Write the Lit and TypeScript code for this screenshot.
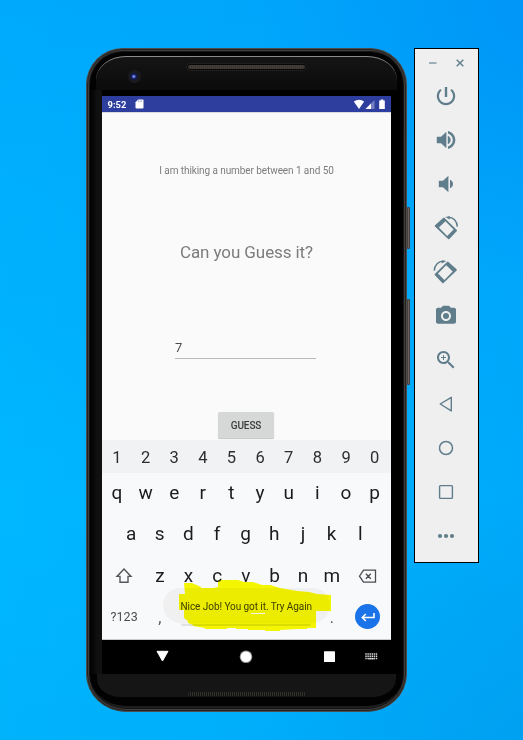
import { LitElement, html, svg, css } from "lit";
import { customElement, property } from "lit/decorators.js";

const rotated = () => svg`<path fill-rule="evenodd" d="M.8 10Q.6 9.6 1 9.2L9.4 1.8Q10 1.4 10.6 1.9L22.8 14Q23.3 14.6 22.9 15.1L15.3 23Q14.7 23.5 14.1 23L1.2 10.7zM4.9 11.6 13.2 19.9 19.6 13.4 11.4 5.2z"/><path d="M11.2 1 15.8 .2V3.4z"/><path d="M14 1.2C19.3 1 23 5 23.3 10.6" fill="none" stroke="#607d8b" stroke-width="1.5"/>`;

const toolIcons = [
  svg`<path d="M13.2 3h-2.4v10h2.4V3zm4.6 2l-1.5 1.5C17.99 7.86 19 9.81 19 12c0 3.87-3.13 7-7 7s-7-3.13-7-7c0-2.19 1.01-4.14 2.7-5.5L6.2 5C4.2 6.7 2.8 9.26 2.8 12c0 5.1 4.13 9.2 9.2 9.2s9.2-4.1 9.2-9.2c0-2.74-1.4-5.3-3.4-7z"/>`,
  svg`<path d="M2.8 8.8v6.4h4.2l5.4 5V3.8L7 8.8zm13.9 3.2c0-1.9-1.02-3.49-2.9-4.33v8.65c1.88-.83 2.9-2.45 2.9-4.32zM14 3v2.5c2.89.86 4.8 3.44 4.8 6.5s-1.91 5.65-4.8 6.5V21c4.11-.91 7.3-4.49 7.3-9s-3.19-8.09-7.3-9z"/>`,
  svg`<path d="M19 12c0-1.87-1.02-3.39-3-4.23v8.45c1.98-.83 3-2.35 3-4.22zM4.8 8.8v6.4H9l5.4 5V3.8L9 8.8H4.8z"/>`,
  rotated(),
  svg`<g transform="matrix(-1 0 0 1 23.6 0)">${rotated()}</g>`,
  svg`<g transform="translate(0 -.3)"><circle cx="12" cy="12.3" r="3"/><path d="M9 2L7.17 4H4c-1.1 0-2 .9-2 2v12c0 1.1.9 2 2 2h16c1.1 0 2-.9 2-2V6c0-1.1-.9-2-2-2h-3.17L15 2H9zm3 15.2c-2.76 0-5-2.24-5-5s2.24-5 5-5 5 2.24 5 5-2.24 5-5 5z"/></g>`,
  svg`<path d="M15.5 14h-.79l-.28-.27C15.41 12.59 16 11.11 16 9.5 16 5.91 13.09 3 9.5 3S3 5.91 3 9.5 5.91 16 9.5 16c1.61 0 3.09-.59 4.23-1.57l.27.28v.79l5 4.99L20.49 19l-4.99-5zm-6 0C7.01 14 5 11.99 5 9.5S7.01 5 9.5 5 14 7.01 14 9.5 11.99 14 9.5 14zM12 10h-2v2H9v-2H7V9h2V7h1v2h2v1z"/>`,
  svg`<path d="M6.2 12 17.3 5.3V18.9z" fill="none" stroke="#607d8b" stroke-width="1.4" stroke-linejoin="round"/>`,
  svg`<circle cx="12" cy="12" r="6.5" fill="none" stroke="#607d8b" stroke-width="1.5"/>`,
  svg`<rect x="5.6" y="5.6" width="12.8" height="12.8" rx=".8" fill="none" stroke="#607d8b" stroke-width="1.4"/>`,
  svg`<circle cx="6" cy="12" r="2.1"/><circle cx="12" cy="12" r="2.1"/><circle cx="18" cy="12" r="2.1"/>`,
];

@customElement("emulator-toolbar")
export class EmulatorToolbar extends LitElement {
  static styles = css`
    :host {
      display: block;
      box-sizing: border-box;
      width: 65px;
      height: 515px;
      border: 1px solid #000;
      background: #efefef;
    }
    .window {
      display: flex;
      justify-content: space-between;
      padding: 8px 12px 0 13px;
      height: 17px;
    }
    .window svg { width: 12px; height: 12px; }
    .tools { display: flex; flex-direction: column; align-items: center; }
    .tool { height: 44px; display: flex; align-items: center; padding-right: 1px; }
    .tool svg { width: 24px; height: 24px; fill: #607d8b; overflow: visible; }
  `;
  render() {
    return html`
      <div class="window">
        <svg viewBox="0 0 12 12"><path d="M1 6h7.5" stroke="#8fa3ad" stroke-width="1.7" /></svg>
        <svg viewBox="0 0 12 12"><path d="M2.7 2.7l6.6 6.6M9.3 2.7l-6.6 6.6" stroke="#607d8b" stroke-width="1.4" /></svg>
      </div>
      <div class="tools">
        ${toolIcons.map((i) => html`<div class="tool"><svg viewBox="0 0 24 24">${i}</svg></div>`)}
      </div>
    `;
  }
}

@customElement("soft-keyboard")
export class SoftKeyboard extends LitElement {
  @property() toast = "";

  static styles = css`
    :host {
      display: block;
      position: relative;
      height: 200px;
      background: #f8f9fb;
      color: #1b1c1e;
      font-family: Roboto, sans-serif;
      box-shadow: inset 0 -1px #c9cbcb;
    }
    .row {
      display: grid;
      grid-auto-flow: column;
      grid-auto-columns: 28.65px;
      height: 41.5px;
      line-height: 41.5px;
      padding-left: 0.6px;
      font-size: 19px;
      text-align: center;
    }
    .digits { height: 33px; line-height: 36px; background: #f1f2f4; font-size: 16.5px; color: #2d2e30; }
    .first { height: 40px; line-height: 39px; }
    .second { padding-left: 14.8px; line-height: 42px; }
    .third { grid-template-columns: 43px repeat(7, 28.65px) 43px; line-height: 42px; }
    .last { grid-template-columns: 43px 28.65px 143.2px 28.65px 43px; height: 43px; line-height: 41px; }
    .icon { display: flex; align-items: center; justify-content: center; }
    .mode { font-size: 12.5px; letter-spacing: 0.1px; color: #4b4d50; }
    .mark { color: #55575a; font-size: 16px; line-height: 44px; }
    .space { height: 26px; margin: 2px 6px 0 7px; background: #f4f4f5; border-radius: 2px; box-shadow: 0 2px #dfe1e2; }
    .enter { width: 25px; height: 25px; border-radius: 50%; background: #1a73e8; display: flex; align-items: center; justify-content: center; margin-bottom: 3px; }
    .toast {
      position: absolute;
      left: 61px;
      top: 148px;
      width: 167px;
      height: 35px;
      box-sizing: border-box;
      border-radius: 18px;
      background: rgba(240, 240, 240, 0.97);
      color: #404040;
      font-size: 10px;
      letter-spacing: -0.06px;
      line-height: 37px;
      padding-left: 17.5px;
      white-space: nowrap;
    }
    .marker { position: absolute; left: 74px; top: 139px; width: 157px; height: 54px; mix-blend-mode: multiply; }
    .fleck { position: absolute; left: 149px; top: 173px; width: 14px; height: 1px; background: #f4f4e4; }
  `;
  private keys(s: string) {
    return [...s].map((c) => html`<span>${c}</span>`);
  }
  render() {
    return html`
      <div class="row digits">${this.keys("1234567890")}</div>
      <div class="row first">${this.keys("qwertyuiop")}</div>
      <div class="row second">${this.keys("asdfghjkl")}</div>
      <div class="row third">
        <span class="icon"><svg width="18" height="18" viewBox="0 0 18 18"><path d="M9 2 2 9.4h3v5.9h8V9.4h3z" fill="none" stroke="#55575a" stroke-width="1.4" /></svg></span>
        ${this.keys("zxcvbnm")}
        <span class="icon"><svg width="20" height="18" viewBox="0 0 20 18"><path d="M5.5 3.2h12v12H5.5L1.5 9.2zM7.8 6.7l5 5M12.8 6.7l-5 5" fill="none" stroke="#4b4d50" stroke-width="1.3" /></svg></span>
      </div>
      <div class="row last">
        <span class="mode">?123</span>
        <span class="mark">,</span>
        <span class="space"></span>
        <span class="mark">.</span>
        <span class="icon"><span class="enter"><svg width="16" height="14" viewBox="0 0 16 14"><path d="M14 3v4.5H2.5M5.8 4 2.3 7.5 5.8 11" fill="none" stroke="#fff" stroke-width="1.6" /></svg></span></span>
      </div>
      <div class="toast">${this.toast}</div>
      <svg class="marker" viewBox="176 579 157 54">
        <path fill="#fbfb00" d="M184 583h8l9 4v1h12l5-1v-7h20l6 2h9l9 3h8l10 3 17 3 12 1 8 2 14 1v16h-15v17h-9v1h-10l-17 1v1h-15v-1h-17v-1h-12v-1h-9v1h-22v-1l-12-2v-1l-5-2v-2l-4-3v-8h-5v-16h6z" />
      </svg>
      <div class="fleck"></div>
    `;
  }
}

@customElement("app-root")
export class AppRoot extends LitElement {
  static styles = css`
    :host {
      display: flex;
      align-items: flex-start;
      gap: 7px;
      box-sizing: border-box;
      width: 523px;
      height: 740px;
      padding: 48px 0 0 86px;
      overflow: hidden;
      font-family: Roboto, sans-serif;
      background:
        radial-gradient(circle at 540px 0, rgba(0, 144, 246, 0.75), rgba(0, 144, 246, 0) 280px),
        radial-gradient(circle at 560px 780px, rgba(0, 150, 230, 0.5), rgba(0, 150, 230, 0) 300px),
        linear-gradient(90deg, rgba(0, 184, 255, 0), rgba(0, 160, 248, 0.6) 100%),
        linear-gradient(180deg, #00a9fc, #00b8ff 68%, #00b3fb);
    }
    .phone {
      position: relative;
      display: flex;
      flex-direction: column;
      box-sizing: border-box;
      width: 321px;
      height: 664px;
      border: 1px solid #4d4b49;
      border-radius: 37px 37px 40px 40px / 37px 37px 38px 38px;
      background: #020202;
      box-shadow: inset 0 0 0 1px #242424, inset 0 0 0 2px #403e3c, inset 0 0 0 3px #161616, inset 0 -5px 1px #202020;
    }
    .top {
      margin: 7px 9px 0 9px;
      height: 34px;
      box-sizing: border-box;
      border-radius: 30px 30px 0 0 / 24px 24px 0 0;
      border-top: 1px solid #8b8b8b;
      background: linear-gradient(#151515, #0b0b0b);
      display: flex;
      padding: 7px 0 0 32px;
    }
    .camera {
      width: 13px;
      height: 13px;
      margin-top: 6px;
      border-radius: 50%;
      background: radial-gradient(circle at 45% 50%, #7180d8 0 1px, #1c256f 2px, #101638 3.5px, #1b1b1d 4.5px);
    }
    .speaker {
      box-sizing: border-box;
      width: 119px;
      height: 6px;
      margin: 0 0 0 46px;
      border: 1px solid #080808;
      border-radius: 3px;
      background: repeating-linear-gradient(90deg, #443d38 0 1px, #39342f 1px 2px);
      box-shadow: 0 0 0 0.5px #2c2c2c;
    }
    .middle {
      margin: 0 4px 0 4px;
      padding: 6px 12px 0 11px;
      background: linear-gradient(90deg, #020202, #101010 6px 11px, #000 11px);
    }
    .screen { width: 289px; height: 578px; display: flex; flex-direction: column; background: #fafafa; }
    .status {
      height: 16px;
      box-sizing: border-box;
      background: #2e3e9e;
      color: #fff;
      display: flex;
      align-items: center;
      padding: 0 5px 0 5.5px;
      box-shadow: 0 1px #d9d9df;
    }
    .clock { font-size: 9.4px; font-weight: 700; line-height: 17px; width: 27.5px; }
    .signals { margin-left: auto; display: flex; }
    .app { height: 328px; box-sizing: border-box; padding-top: 52px; display: flex; flex-direction: column; align-items: center; color: #7c7c7c; overflow: hidden; }
    .hint { font-size: 10px; letter-spacing: -0.08px; line-height: 14px; white-space: nowrap; }
    .title { font-size: 17px; letter-spacing: -0.09px; line-height: 24px; margin-top: 62px; white-space: nowrap; }
    .field { width: 141px; height: 19px; box-sizing: border-box; margin: 75.5px 0 0 -2px; border-bottom: 1.5px solid #b9b9b9; color: #4c4c4c; font-size: 13px; line-height: 16px; }
    .guess { width: 56px; height: 26px; flex: none; margin: 53.5px 0 0 -1px; border-radius: 1.5px; background: #d6d7d7; box-shadow: 0 1px 1px #c5c5c5; color: #3a3a3a; font-weight: 500; font-size: 10px; letter-spacing: -0.1px; line-height: 27px; text-align: center; }
    .nav { height: 34px; background: #000; display: block; }
    .nav svg { display: block; }
    .bottom { display: flex; justify-content: center; margin: 0 10px 0 10px; height: 23px; background: #151515; border-radius: 0 0 24px 24px / 0 0 18px 18px; }
    .grille { width: 118px; height: 4px; margin-top: 18px; border-radius: 3px; background: repeating-linear-gradient(90deg, #33322b 0 1px, #111 1px 2px); }
    .button { position: absolute; left: 320px; width: 3px; box-sizing: border-box; border: 1px solid #47403d; background: #6b605d; border-radius: 0 1px 1px 0; }
    .power { top: 158px; height: 42px; }
    .volume { top: 250px; height: 86px; }
  `;
  render() {
    return html`
      <div class="phone">
        <div class="top"><div class="camera"></div><div class="speaker"></div></div>
        <div class="middle">
          <div class="screen">
            <div class="status">
              <span class="clock">9:52</span>
              <svg width="9" height="10" viewBox="0 0 9 10"><path d="M3.2.5h4.5q.8 0 .8.8v7.4q0 .8-.8.8H1.3q-.8 0-.8-.8V3.2z" fill="#fff" /><path d="M3.5 1.5v1.6M5 1.5v1.6M6.6 1.5v1.6" stroke="#6d78bd" stroke-width=".6" /></svg>
              <svg class="signals" width="33" height="11" viewBox="0 0 33 11">
                <path d="M.8 2.5Q6 -1 11.2 2.5L6 10z" fill="#fff" />
                <path d="M21.5 1v9H12.5z" fill="#7680c0" /><path d="M18 4.5V10h-5.5z" fill="#fff" />
                <path d="M26.2 1.5h1.5V.6h2.6v.9h1.5v8.6h-5.6z" fill="#fff" />
              </svg>
            </div>
            <div class="app">
              <div class="hint">I am thiking a number between 1 and 50</div>
              <div class="title">Can you Guess it?</div>
              <div class="field">7</div>
              <div class="guess">GUESS</div>
            </div>
            <soft-keyboard toast="Nice Job! You got it. Try Again"></soft-keyboard>
            <div class="nav">
              <svg width="289" height="34" viewBox="0 0 289 34">
                <path d="M55 11.3h11L60.5 21z" fill="#fff" stroke="#fff" stroke-width="1" stroke-linejoin="round" />
                <circle cx="144" cy="16.7" r="6.3" fill="#999" /><circle cx="144" cy="16.7" r="5.3" fill="#fff" />
                <rect x="222" y="11.3" width="11" height="10.7" rx=".6" fill="#fff" />
                <path d="M263.3 14h12M263.3 16.3h12M263.3 18.5h12" stroke="#ddd" stroke-width="1.5" stroke-dasharray="1.4 .7" />
                <path d="M266.3 18.8h6" stroke="#ddd" stroke-width="1" />
              </svg>
            </div>
          </div>
        </div>
        <div class="bottom"><div class="grille"></div></div>
        <div class="button power"></div>
        <div class="button volume"></div>
      </div>
      <emulator-toolbar></emulator-toolbar>
    `;
  }
}
